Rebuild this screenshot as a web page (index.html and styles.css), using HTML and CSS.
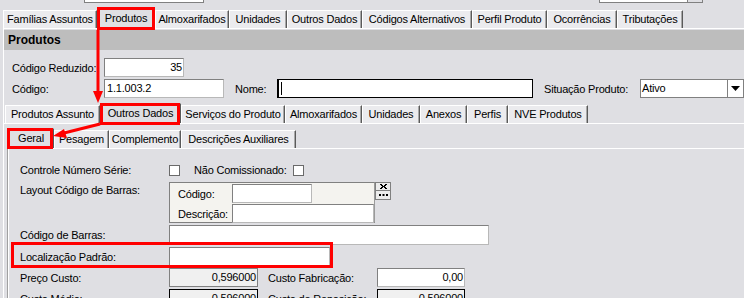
FILE: index.html
```html
<!DOCTYPE html>
<html lang="pt">
<head>
<meta charset="utf-8">
<link rel="stylesheet" href="styles.css">
</head>
<body>
<div class="page">
  <div class="stubs">
    <div class="stub stub-a"></div>
    <div class="stub stub-b"><span class="stub-btn"></span></div>
  </div>

  <div class="tabs tabs-main">
    <div class="tab t94">Famílias Assuntos</div>
    <div class="tab active t58">Produtos</div>
    <div class="tab t74">Almoxarifados</div>
    <div class="tab t58">Unidades</div>
    <div class="tab t75">Outros Dados</div>
    <div class="tab t110">Códigos Alternativos</div>
    <div class="tab t75">Perfil Produto</div>
    <div class="tab t70">Ocorrências</div>
    <div class="tab t66">Tributações</div>
  </div>

  <div class="panel">
    <div class="header">Produtos</div>

    <div class="fields">
      <div class="frow">
        <span class="flabel">Código Reduzido:</span>
        <div class="input w79 right">35</div>
      </div>
      <div class="frow">
        <span class="flabel">Código:</span>
        <div class="input w119">1.1.003.2</div>
        <span class="nome-label">Nome:</span>
        <div class="input focus w255"><span class="caret"></span></div>
        <span class="sit-label">Situação Produto:</span>
        <div class="input select w103">Ativo<span class="dd"><svg width="9" height="5" viewBox="0 0 9 5"><path d="M0 0h9L4.5 5z" fill="#000"/></svg></span></div>
      </div>
    </div>

    <div class="tabs tabs-sub">
      <div class="tab t95">Produtos Assunto</div>
      <div class="tab active t81">Outros Dados</div>
      <div class="tab t104">Serviços do Produto</div>
      <div class="tab t77">Almoxarifados</div>
      <div class="tab t58">Unidades</div>
      <div class="tab t47">Anexos</div>
      <div class="tab t41">Perfis</div>
      <div class="tab t80">NVE Produtos</div>
    </div>

    <div class="panel2">
      <div class="tabs tabs-sub2">
        <div class="tab active t46">Geral</div>
        <div class="tab t55">Pesagem</div>
        <div class="tab t72">Complemento</div>
        <div class="tab t115">Descrições Auxiliares</div>
      </div>

      <div class="panel3">
        <div class="grid">
          <span class="glabel">Controle Número Série:</span>
          <div class="checks">
            <span class="chk"></span>
            <span class="chk-label">Não Comissionado:</span>
            <span class="chk"></span>
          </div>

          <span class="glabel lay">Layout Código de Barras:</span>
          <div class="laywrap">
            <div class="groupbox">
              <div class="grow"><span class="glab">Código:</span><div class="input w79 h19"></div></div>
              <div class="grow"><span class="glab">Descrição:</span><div class="input w141 h19"></div></div>
            </div>
            <div class="btns">
              <div class="sbtn"><svg width="7" height="5" viewBox="0 0 7 5"><path d="M0 0h2v1h1v1h1V1h1V0h2v1H6v1H5v1h1v1h1v1H5V4H4V3H3v1H2v1H0V4h1V3h1V2H1V1H0z" fill="#000"/></svg></div>
              <div class="sbtn"><svg width="9" height="2" viewBox="0 0 9 2"><path d="M0 0h2v2H0zM3.5 0h2v2h-2zM7 0h2v2H7z" fill="#000"/></svg></div>
            </div>
          </div>

          <span class="glabel">Código de Barras:</span>
          <div class="input w320 h20"></div>

          <span class="glabel">Localização Padrão:</span>
          <div class="input w160 h19"></div>

          <span class="glabel">Preço Custo:</span>
          <div class="costs">
            <div class="input dis w88 right h19">0,596000</div>
            <span class="clabel">Custo Fabricação:</span>
            <div class="input w87 right h19">0,00</div>
          </div>

          <span class="glabel">Custo Médio:</span>
          <div class="costs">
            <div class="input dis dark w88 right h19">0,596000</div>
            <span class="clabel">Custo de Reposição:</span>
            <div class="input dis dark w87 right h19">0,596000</div>
          </div>
        </div>
      </div>
    </div>
  </div>

  <svg class="annot" width="744" height="298" viewBox="0 0 744 298">
    <g fill="none" stroke="#ff0000" stroke-width="3">
      <rect x="98.5" y="8.5" width="55" height="20"/>
      <rect x="101.5" y="104.5" width="77" height="19"/>
      <rect x="8.5" y="129.5" width="43" height="18"/>
      <rect x="12.5" y="243.5" width="319" height="23"/>
      <line x1="98" y1="30" x2="98" y2="92"/>
      <line x1="100" y1="124" x2="64" y2="133"/>
    </g>
    <path d="M93 91h10l-5 12z" fill="#ff0000"/>
    <path d="M53 136l11-7 3 9z" fill="#ff0000"/>
  </svg>
</div>
</body>
</html>
```
FILE: styles.css
```css
* { box-sizing: border-box; }
html, body { margin: 0; padding: 0; }
body {
  background: #dfdfe3;
  font-family: "Liberation Sans", Arial, sans-serif;
  font-size: 11px;
  letter-spacing: -0.2px;
  color: #000;
  width: 744px;
  height: 298px;
  overflow: hidden;
}
.page { position: relative; width: 744px; height: 298px; overflow: hidden; }

.stubs { height: 8px; display: flex; }
.stub {
  height: 3px;
  background: #fff;
  border: 1px solid #808080;
  border-top: none;
}
.stub-a { margin-left: 84px; width: 120px; }
.stub-b { margin-left: 395px; width: 104px; position: relative; }
.stub-btn { position: absolute; right: 0; top: 0; width: 15px; height: 2px; border-left: 1px solid #808080; background: #dfdfe3; }

.tabs { display: flex; align-items: flex-end; }
.tab {
  height: 18px;
  line-height: 17px;
  padding: 0;
  text-align: center;
  background: #ebebee;
  border-top: 1px solid #fff;
  border-left: 1px solid #fff;
  border-right: 1px solid #5a5a5a;
  box-shadow: inset -1px 0 #a8a8a8;
  white-space: nowrap;
}
.tab.active {
  height: 20px;
  line-height: 18px;
  background: #dfdfe3;
  position: relative;
  z-index: 1;
}
.t41 { width: 41px; } .t46 { width: 46px; } .t47 { width: 47px; }
.t55 { width: 55px; } .t58 { width: 58px; } .t66 { width: 66px; }
.t70 { width: 70px; } .t72 { width: 72px; } .t74 { width: 74px; }
.t75 { width: 75px; } .t77 { width: 77px; } .t80 { width: 80px; }
.t81 { width: 81px; } .t94 { width: 94px; } .t95 { width: 95px; }
.t104 { width: 104px; } .t110 { width: 110px; } .t115 { width: 115px; }

.tabs-main { height: 20px; padding-left: 3px; }

.panel {
  border-top: 1px solid #fff;
  border-left: 1px solid #fff;
  margin-left: 3px;
  padding-top: 1px;
}
.header {
  height: 20px;
  background: #bdbdbd;
  font-weight: bold;
  font-size: 12px;
  letter-spacing: 0;
  line-height: 20px;
  padding-left: 4px;
}

.fields { padding: 8px 0 0 0; display: flex; flex-direction: column; gap: 2px; }
.frow { display: flex; align-items: center; height: 19px; }
.flabel { width: 100px; padding-left: 8px; }
.nome-label { margin-left: 11px; width: 42px; }
.sit-label { margin-left: 11px; width: 96px; }

.input {
  height: 19px;
  background: #fff;
  border: 1px solid #808080;
  border-right-color: #b8b8b8;
  border-bottom-color: #b8b8b8;
  line-height: 17px;
  padding: 0 2px;
  white-space: nowrap;
  overflow: hidden;
}
.input.right { text-align: right; padding-right: 1px; }
.input.focus { border: 1px solid #000; border-left-width: 2px; position: relative; }
.caret { display: inline-block; width: 1px; height: 13px; background: #000; vertical-align: middle; margin-top: -2px; }
.input.select { position: relative; padding-left: 1px; border-color: #808080; }
.dd {
  position: absolute; right: 0; top: 0; bottom: 0; width: 16px;
  border-left: 1px solid #808080;
  background: #fff;
  display: flex; align-items: center; justify-content: center;
}
.input.dis { background: #f0f0f0; border-color: #808080; }
.input.dis.dark { border: 1px solid #000; }
.w79 { width: 80px; }
.w119 { width: 120px; }
.w255 { width: 256px; }
.w103 { width: 104px; }
.w141 { width: 142px; }
.w320 { width: 320px; }
.w160 { width: 161px; }
.w88 { width: 89px; }
.w87 { width: 88px; }
.h19 { height: 19px; }
.h20 { height: 20px; }

.tabs-sub { height: 20px; margin-top: 5px; padding-left: 1px; }
.panel2 {
  border-top: 1px solid #fff;
  padding-left: 3px;
  padding-top: 4px;
}
.tabs-sub2 { height: 20px; padding-left: 1px; }
.panel3 {
  border-top: 1px solid #fff;
  border-left: 1px solid #fff;
  box-shadow: -1px 0 #a0a0a0;
  margin-left: 1px;
  padding: 15px 0 0 11px;
  height: 160px;
}

.grid {
  display: grid;
  grid-template-columns: 149px auto;
  grid-template-rows: 12px 45px 20px 19px 19px 19px;
  row-gap: 2px;
  align-items: center;
}
.glabel { white-space: nowrap; }
.glabel.lay { align-self: start; padding-top: 6px; }
.checks { display: flex; align-items: center; height: 12px; }
.chk { width: 11px; height: 11px; background: #fff; border: 1px solid #6a6a6a; }
.chk-label { margin: 0 6px 0 14px; }

.laywrap { display: flex; align-items: flex-start; align-self: start; margin-top: 4px; }
.groupbox {
  width: 206px;
  height: 41px;
  background: #f4f3ef;
  border: 1px solid #808080;
  border-right-color: #9a9a9a;
  padding: 1px 0 0 8px;
  display: flex; flex-direction: column; gap: 1px;
}
.grow { display: flex; align-items: center; height: 19px; }
.glab { width: 54px; }
.btns { display: flex; flex-direction: column; margin-top: 0; }
.sbtn {
  width: 16px; height: 9px;
  border: 1px solid #808080;
  background: #ececec;
  display: flex; align-items: center; justify-content: center;
}
.sbtn + .sbtn { border-top: none; }

.costs { display: flex; align-items: center; }
.clabel { width: 119px; padding-left: 10px; }

.annot { position: absolute; left: 0; top: 0; pointer-events: none; z-index: 5; }
```
